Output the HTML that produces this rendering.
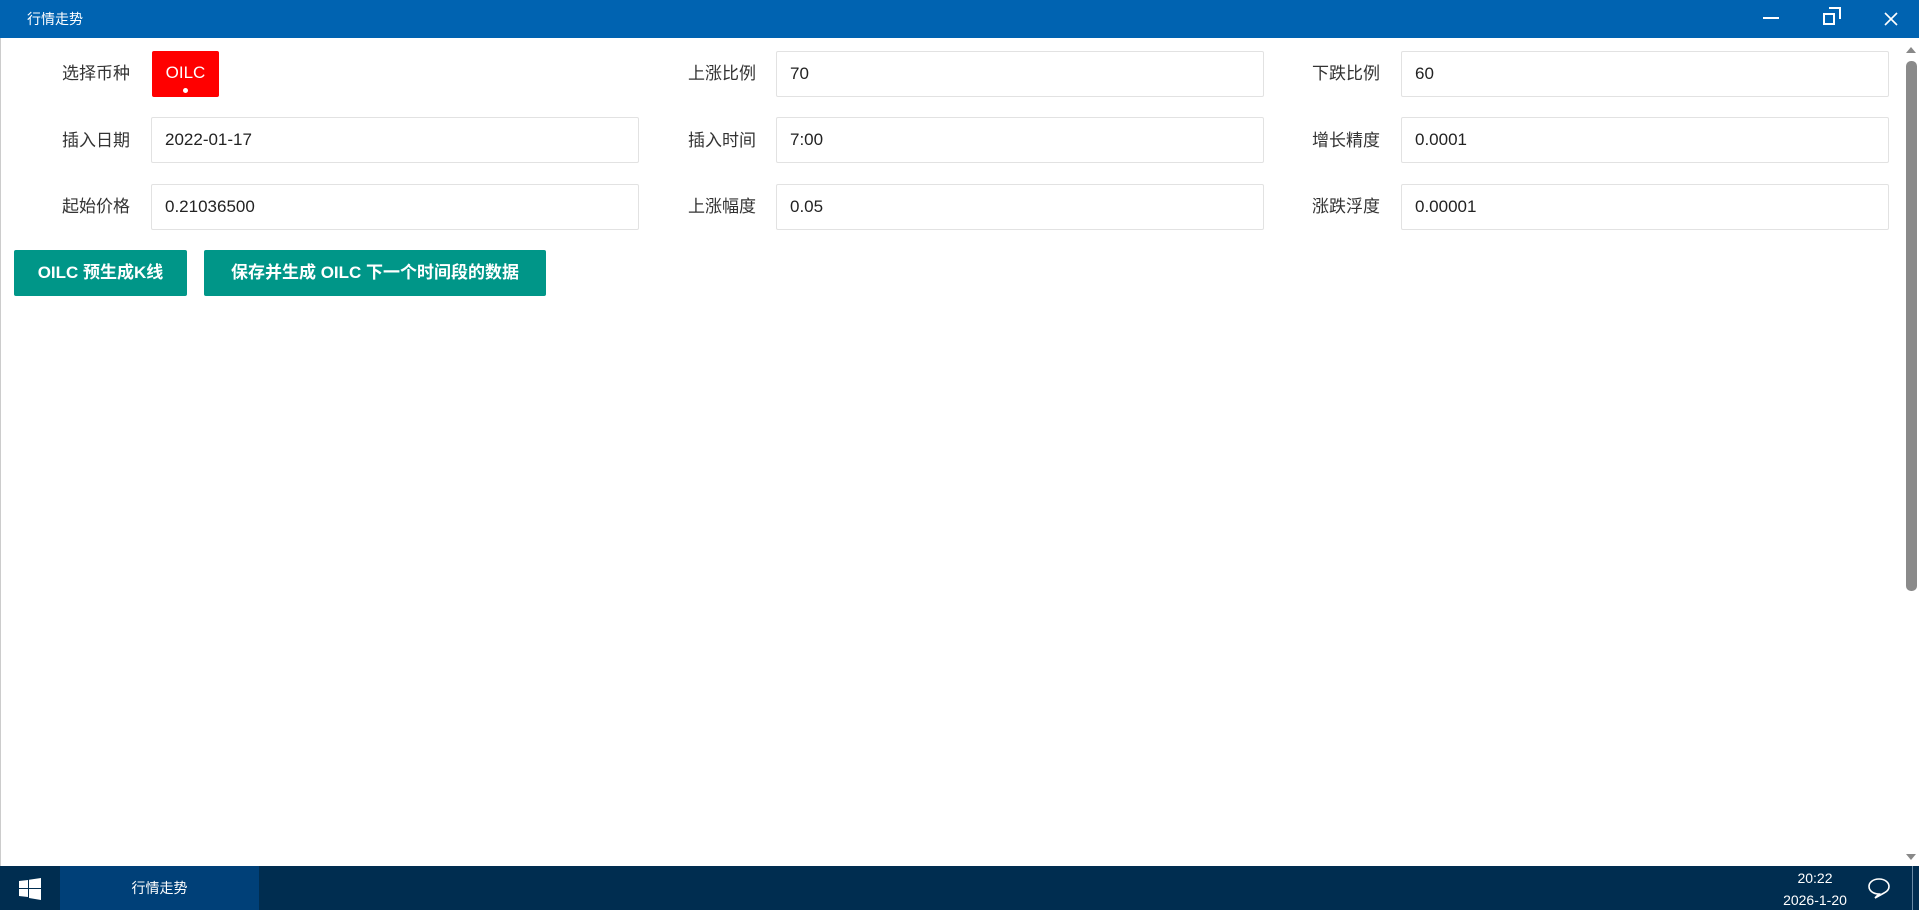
<!DOCTYPE html>
<html><head><meta charset="utf-8"><style>
*{margin:0;padding:0;box-sizing:border-box}
body{width:1919px;height:910px;overflow:hidden;background:#fff;font-family:"Liberation Sans","Noto Sans CJK SC",sans-serif;position:relative}
.tb{position:absolute;left:0;top:0;width:1919px;height:38px;background:#0063b1;color:#fff}
.tb .t{position:absolute;left:27px;top:9px;font-size:14px}
.lbl{position:absolute;font-size:17px;color:#333;line-height:20px}
.in{position:absolute;height:46px;border:1px solid #e2e2e2;border-radius:2px;font-size:17px;color:#222;padding-left:13px;line-height:44px}
.btn{position:absolute;top:250px;height:46px;background:#009688;color:#fff;font-size:17px;font-weight:bold;line-height:46px;text-align:center;border-radius:2px}
.task{position:absolute;left:0;top:866px;width:1919px;height:44px;background:#002d50;color:#fff}
</style></head><body>
<div class="tb"><div class="t">行情走势</div>
<div style="position:absolute;left:1763px;top:17px;width:16px;height:2px;background:#fff"></div>
<div style="position:absolute;left:1823px;top:13px;width:12px;height:12px;border:2px solid #fff;background:#0063b1"></div>
<div style="position:absolute;left:1829px;top:7px;width:12px;height:12px;border:2px solid #fff;border-left:none;border-bottom:none"></div>
<svg style="position:absolute;left:1884px;top:12px" width="14" height="14"><path d="M1 1L13 13M13 1L1 13" stroke="#fff" stroke-width="1.6"/></svg>
</div>
<div style="position:absolute;left:0;top:38px;width:1px;height:828px;background:#ccc"></div>

<div class="lbl" style="left:62px;top:64px">选择币种</div>
<div style="position:absolute;left:152px;top:51px;width:67px;height:46px;background:#f00;border-radius:2px;color:#fff;font-size:17px;text-align:center;line-height:44px">OILC<div style="position:absolute;left:31px;top:37px;width:5px;height:5px;border-radius:50%;background:#fff"></div></div>
<div class="lbl" style="left:62px;top:131px">插入日期</div>
<div class="in" style="left:151px;top:117px;width:488px">2022-01-17</div>
<div class="lbl" style="left:62px;top:197px">起始价格</div>
<div class="in" style="left:151px;top:184px;width:488px">0.21036500</div>

<div class="lbl" style="left:688px;top:64px">上涨比例</div>
<div class="in" style="left:776px;top:51px;width:488px">70</div>
<div class="lbl" style="left:688px;top:131px">插入时间</div>
<div class="in" style="left:776px;top:117px;width:488px">7:00</div>
<div class="lbl" style="left:688px;top:197px">上涨幅度</div>
<div class="in" style="left:776px;top:184px;width:488px">0.05</div>

<div class="lbl" style="left:1312px;top:64px">下跌比例</div>
<div class="in" style="left:1401px;top:51px;width:488px">60</div>
<div class="lbl" style="left:1312px;top:131px">增长精度</div>
<div class="in" style="left:1401px;top:117px;width:488px">0.0001</div>
<div class="lbl" style="left:1312px;top:197px">涨跌浮度</div>
<div class="in" style="left:1401px;top:184px;width:488px">0.00001</div>

<div class="btn" style="left:14px;width:173px">OILC 预生成K线</div>
<div class="btn" style="left:204px;width:342px">保存并生成 OILC 下一个时间段的数据</div>

<div style="position:absolute;left:1904px;top:38px;width:15px;height:828px;background:#fff"></div>
<svg style="position:absolute;left:1905px;top:46px" width="12" height="8"><path d="M1 7L6 1L11 7Z" fill="#888"/></svg>
<div style="position:absolute;left:1906px;top:61px;width:11px;height:530px;background:#8a8a8a;border-radius:5px"></div>
<svg style="position:absolute;left:1905px;top:853px" width="12" height="8"><path d="M1 1L6 7L11 1Z" fill="#888"/></svg>

<div class="task">
<svg style="position:absolute;left:19px;top:12px" width="22" height="22"><path d="M0 3L9 2V10H0ZM10 1.8L22 0V10H10ZM0 11H9V19L0 18ZM10 11H22V22L10 20Z" fill="#fff"/></svg>
<div style="position:absolute;left:60px;top:0;width:199px;height:44px;background:#004078"></div>
<div style="position:absolute;left:60px;top:0;width:199px;line-height:44px;text-align:center;font-size:14px">行情走势</div>
<div style="position:absolute;left:1770px;top:1px;width:90px;text-align:center;font-size:14px;line-height:22px">20:22<br>2026-1-20</div>
<svg style="position:absolute;left:1867px;top:11px" width="24" height="22"><path d="M12 2C6 2 2 5.5 2 9.5C2 13.5 6 17 12 17L8 21L17 16C20 14.5 22 12 22 9.5C22 5.5 18 2 12 2Z" fill="none" stroke="#fff" stroke-width="1.6"/></svg>
<div style="position:absolute;left:1912px;top:0;width:1px;height:44px;background:#6a8aa5"></div>
</div>
</body></html>
